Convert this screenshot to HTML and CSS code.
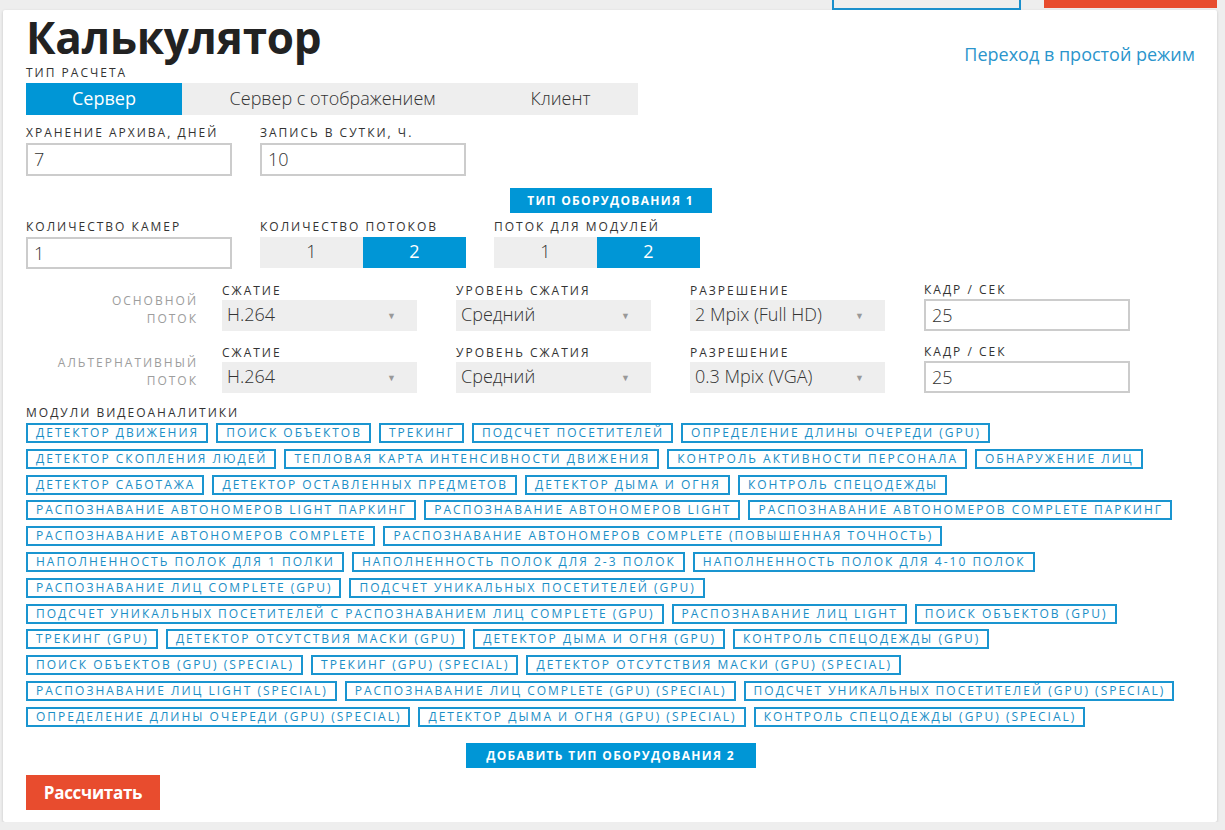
FILE: index.html
```html
<!DOCTYPE html>
<html lang="ru">
<head>
<meta charset="utf-8">
<title>Калькулятор</title>
<link rel="stylesheet" href="styles.css">
</head>
<body>
<div class="topbar">
  <div class="ghost-btn"></div>
  <div class="red-btn"></div>
</div>
<main class="card">
  <header class="head">
    <h1 class="title">Калькулятор</h1>
    <a class="mode-link" href="#">Переход в простой режим</a>
  </header>

  <div class="label">Тип расчета</div>
  <div class="tabs">
    <div class="tab active">Сервер</div>
    <div class="tab">Сервер с отображением</div>
    <div class="tab">Клиент</div>
  </div>

  <div class="fields row1">
    <div class="field">
      <div class="label">Хранение архива, дней</div>
      <div class="input">7</div>
    </div>
    <div class="field">
      <div class="label">Запись в сутки, ч.</div>
      <div class="input">10</div>
    </div>
  </div>

  <div class="center"><div class="blue-btn">Тип оборудования 1</div></div>

  <div class="fields row2">
    <div class="field">
      <div class="label">Количество камер</div>
      <div class="input">1</div>
    </div>
    <div class="field">
      <div class="label">Количество потоков</div>
      <div class="seg"><div class="seg-i">1</div><div class="seg-i on">2</div></div>
    </div>
    <div class="field">
      <div class="label">Поток для модулей</div>
      <div class="seg"><div class="seg-i">1</div><div class="seg-i on">2</div></div>
    </div>
  </div>

  <div class="stream">
    <div class="side">Основной<br>поток</div>
    <div class="sfield"><div class="label">Сжатие</div><div class="select">H.264<span class="arr">▼</span></div></div>
    <div class="sfield"><div class="label">Уровень сжатия</div><div class="select">Средний<span class="arr">▼</span></div></div>
    <div class="sfield"><div class="label">Разрешение</div><div class="select">2 Mpix (Full HD)<span class="arr">▼</span></div></div>
    <div class="sfield"><div class="label">Кадр / сек</div><div class="input">25</div></div>
  </div>
  <div class="stream s2">
    <div class="side">Альтернативный<br>поток</div>
    <div class="sfield"><div class="label">Сжатие</div><div class="select">H.264<span class="arr">▼</span></div></div>
    <div class="sfield"><div class="label">Уровень сжатия</div><div class="select">Средний<span class="arr">▼</span></div></div>
    <div class="sfield"><div class="label">Разрешение</div><div class="select">0.3 Mpix (VGA)<span class="arr">▼</span></div></div>
    <div class="sfield"><div class="label">Кадр / сек</div><div class="input">25</div></div>
  </div>

  <div class="label mod-label">Модули видеоаналитики</div>
  <div class="chips">
    <div class="chip-row"><span class="chip">Детектор движения</span><span class="chip">Поиск объектов</span><span class="chip">Трекинг</span><span class="chip">Подсчет посетителей</span><span class="chip">Определение длины очереди (GPU)</span></div>
    <div class="chip-row"><span class="chip">Детектор скопления людей</span><span class="chip">Тепловая карта интенсивности движения</span><span class="chip">Контроль активности персонала</span><span class="chip">Обнаружение лиц</span></div>
    <div class="chip-row"><span class="chip">Детектор саботажа</span><span class="chip">Детектор оставленных предметов</span><span class="chip">Детектор дыма и огня</span><span class="chip">Контроль спецодежды</span></div>
    <div class="chip-row"><span class="chip">Распознавание автономеров Light паркинг</span><span class="chip">Распознавание автономеров Light</span><span class="chip">Распознавание автономеров Complete паркинг</span></div>
    <div class="chip-row"><span class="chip">Распознавание автономеров Complete</span><span class="chip">Распознавание автономеров Complete (повышенная точность)</span></div>
    <div class="chip-row"><span class="chip">Наполненность полок для 1 полки</span><span class="chip">Наполненность полок для 2-3 полок</span><span class="chip">Наполненность полок для 4-10 полок</span></div>
    <div class="chip-row"><span class="chip">Распознавание лиц Complete (GPU)</span><span class="chip">Подсчет уникальных посетителей (GPU)</span></div>
    <div class="chip-row"><span class="chip">Подсчет уникальных посетителей с распознаванием лиц Complete (GPU)</span><span class="chip">Распознавание лиц Light</span><span class="chip">Поиск объектов (GPU)</span></div>
    <div class="chip-row"><span class="chip">Трекинг (GPU)</span><span class="chip">Детектор отсутствия маски (GPU)</span><span class="chip">Детектор дыма и огня (GPU)</span><span class="chip">Контроль спецодежды (GPU)</span></div>
    <div class="chip-row"><span class="chip">Поиск объектов (GPU) (Special)</span><span class="chip">Трекинг (GPU) (Special)</span><span class="chip">Детектор отсутствия маски (GPU) (Special)</span></div>
    <div class="chip-row"><span class="chip">Распознавание лиц Light (Special)</span><span class="chip">Распознавание лиц Complete (GPU) (Special)</span><span class="chip">Подсчет уникальных посетителей (GPU) (Special)</span></div>
    <div class="chip-row"><span class="chip">Определение длины очереди (GPU) (Special)</span><span class="chip">Детектор дыма и огня (GPU) (Special)</span><span class="chip">Контроль спецодежды (GPU) (Special)</span></div>
  </div>

  <div class="center add"><div class="blue-btn wide">Добавить тип оборудования 2</div></div>

  <div class="calc">Рассчитать</div>
</main>
</body>
</html>
```
FILE: styles.css
```css
* { box-sizing: border-box; }
body {
  margin: 0;
  background: #eeeeee;
  font-family: "Open Sans", "Noto Sans", sans-serif;
  color: #333;
}
.topbar {
  height: 10px;
  display: flex;
  justify-content: flex-end;
  align-items: flex-start;
  padding-right: 8px;
  gap: 23px;
}
.ghost-btn {
  width: 189px;
  height: 10px;
  border: 2px solid #1a8fcc;
  border-top: none;
}
.red-btn {
  width: 173px;
  height: 8px;
  background: #e84c2e;
}
.card {
  margin: 0 8px 0 3px;
  background: #fff;
  padding: 0 22px 12px 23px;
  box-shadow: 0 1px 3px rgba(0,0,0,0.18);
  border-radius: 2px;
}
.head {
  display: flex;
  justify-content: space-between;
  align-items: flex-end;
  height: 56px;
}
.title {
  margin: 0;
  font-size: 44px;
  font-weight: 700;
  color: #222;
  line-height: 54px;
  letter-spacing: -0.2px;
  align-self: flex-start;
}
.mode-link {
  color: #2b95cc;
  font-size: 18px;
  text-decoration: none;
  line-height: 20px;
  margin-bottom: 2px;
}
.label {
  font-size: 12px;
  line-height: 14px;
  text-transform: uppercase;
  letter-spacing: 2px;
  color: #333;
  font-weight: 500;
  white-space: nowrap;
}
.tabs {
  display: flex;
  margin-top: 3px;
  width: 612px;
  height: 32px;
}
.tab {
  background: #eeeeee;
  font-size: 18px;
  font-weight: 300;
  line-height: 30px;
  padding: 0 44px;
  color: #333;
  flex: 1 1 auto;
  text-align: center;
}
.tab:first-child { flex: 0 0 156px; padding: 0; }
.tab.active { background: #0096d6; color: #fff; font-weight: 400; }
.fields {
  display: flex;
  gap: 28px;
}
.row1 { margin-top: 11px; }
.field { width: 206px; }
.field .label { margin-bottom: 3px; }
.input {
  height: 33px;
  border: 2px solid #cccccc;
  font-size: 18px;
  font-weight: 300;
  line-height: 29px;
  padding-left: 6px;
  color: #333;
  background: #fff;
}
.center {
  display: flex;
  justify-content: center;
}
.center:not(.add) { margin-top: 12px; }
.blue-btn {
  width: 202px;
  height: 25px;
  background: #0096d6;
  color: #fff;
  font-size: 12px;
  font-weight: 700;
  letter-spacing: 1.3px;
  text-transform: uppercase;
  text-align: center;
  line-height: 25px;
}
.blue-btn.wide { width: 290px; }
.row2 { margin-top: 7px; }
.row2 .input { height: 32px; }
.seg {
  display: flex;
  height: 31px;
}
.seg-i {
  flex: 1;
  background: #eeeeee;
  font-size: 18px;
  font-weight: 300;
  text-align: center;
  line-height: 29px;
  color: #333;
}
.seg-i.on { background: #0096d6; color: #fff; font-weight: 400; }
.stream {
  display: flex;
  align-items: center;
  margin-top: 14px;
}
.stream.s2 { margin-top: 14px; }
.side {
  width: 172px;
  margin-right: 24px;
  text-align: right;
  color: #9d9d9d;
  font-size: 12px;
  font-weight: 500;
  line-height: 18px;
  letter-spacing: 2px;
  text-transform: uppercase;
  padding-top: 6px;
}
.sfield { width: 234px; }
.sfield .label { margin-bottom: 2px; }
.sfield .input { width: 206px; height: 32px; }
.select {
  position: relative;
  width: 195px;
  height: 31px;
  background: #eeeeee;
  font-size: 18px;
  font-weight: 300;
  line-height: 29px;
  padding-left: 5px;
  color: #333;
}
.arr {
  position: absolute;
  right: 21px;
  top: 1px;
  font-size: 9px;
  color: #999;
}
.mod-label { margin-top: 13px; }
.chips {
  margin-top: 3px;
  display: flex;
  flex-direction: column;
  gap: 5.8px;
}
.chip-row {
  display: flex;
  gap: 8px;
}
.chip {
  height: 20px;
  border: 2px solid #1a95d0;
  color: #1a8ec6;
  font-size: 12px;
  line-height: 16px;
  letter-spacing: 2px;
  text-transform: uppercase;
  padding: 0 7px 0 8px;
  white-space: nowrap;
}
.add { margin-top: 16px; }
.calc {
  margin-top: 7px;
  width: 134px;
  height: 35px;
  background: #e84c2e;
  color: #fff;
  font-size: 17px;
  font-weight: 700;
  line-height: 35px;
  text-align: center;
  letter-spacing: -0.3px;
}
```
